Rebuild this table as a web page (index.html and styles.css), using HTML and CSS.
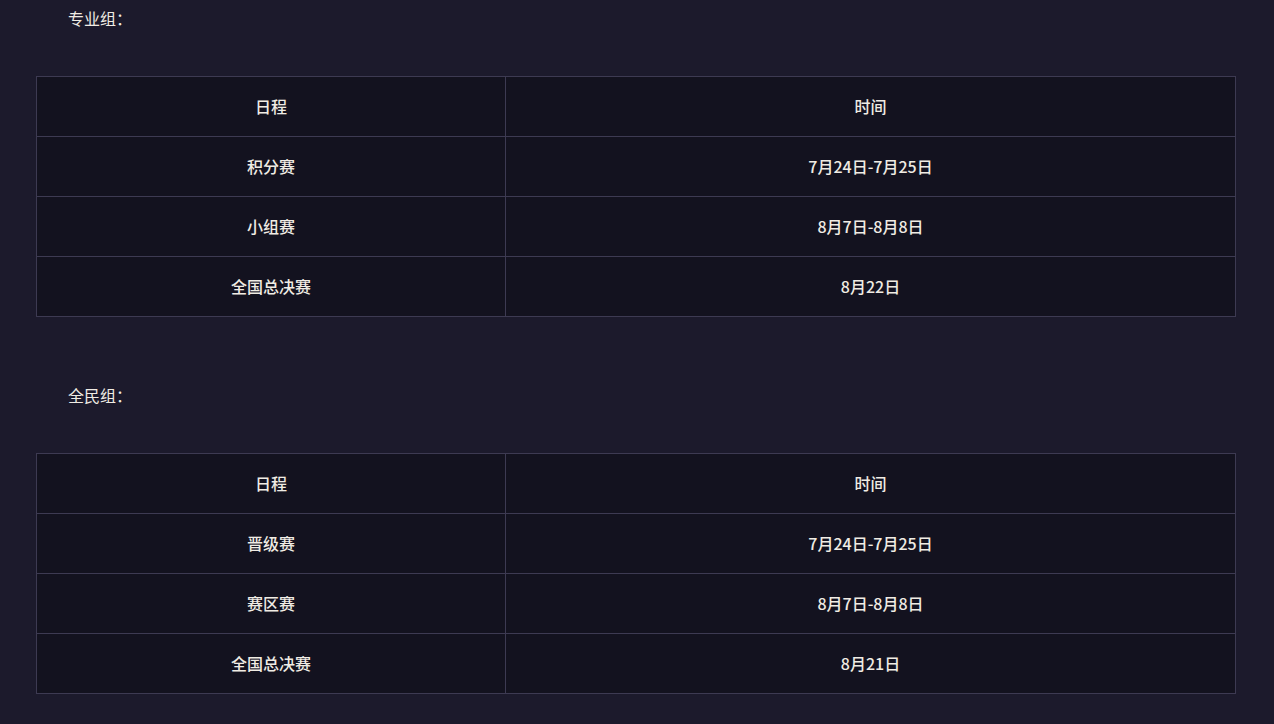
FILE: index.html
```html
<!DOCTYPE html>
<html lang="zh">
<head>
<meta charset="utf-8">
<link rel="stylesheet" href="styles.css">
</head>
<body>
<div class="page">
  <section class="group">
    <div class="label">专业组：</div>
    <table class="schedule">
      <tr><td class="c1">日程</td><td>时间</td></tr>
      <tr><td class="c1">积分赛</td><td>7月24日-7月25日</td></tr>
      <tr><td class="c1">小组赛</td><td>8月7日-8月8日</td></tr>
      <tr><td class="c1">全国总决赛</td><td>8月22日</td></tr>
    </table>
  </section>
  <section class="group">
    <div class="label">全民组：</div>
    <table class="schedule">
      <tr><td class="c1">日程</td><td>时间</td></tr>
      <tr><td class="c1">晋级赛</td><td>7月24日-7月25日</td></tr>
      <tr><td class="c1">赛区赛</td><td>8月7日-8月8日</td></tr>
      <tr><td class="c1">全国总决赛</td><td>8月21日</td></tr>
    </table>
  </section>
</div>
</body>
</html>
```
FILE: styles.css
```css
html, body {
  margin: 0;
  padding: 0;
  background: #1c1a2c;
}
body {
  font-family: "Noto Sans CJK SC", "Liberation Sans", sans-serif;
  font-size: 16px;
  color: #f0ece4;
}
.page {
  width: 1200px;
  margin-left: 36px;
  padding-top: 8px;
}
.group {
  margin-bottom: 68px;
}
.group:last-child {
  margin-bottom: 0;
}
.label {
  height: 20px;
  line-height: 20px;
  padding-left: 32px;
  margin-bottom: 48px;
}
.schedule {
  width: 1200px;
  border-collapse: collapse;
  background: #13121f;
}
.schedule td {
  height: 58px;
  padding: 0 0 1px;
  border: 1px solid #3d3a52;
  text-align: center;
  vertical-align: middle;
  line-height: 20px;
  font-weight: 500;
}
.schedule td.c1 {
  width: 468px;
}
```
